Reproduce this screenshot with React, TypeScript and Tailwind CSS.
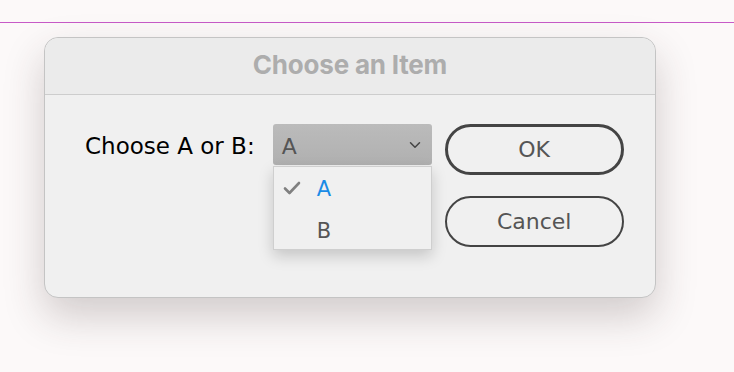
import { ChevronDown } from 'lucide-react';

const lucida = { fontFamily: '"DejaVu Sans", "Liberation Sans", sans-serif' };

export default function App() {
  return (
    <div className="w-[734px] h-[372px] bg-[#fcf9f9] overflow-hidden">
      {/* guide line */}
      <div className="h-[22px]" />
      <div className="h-px bg-[#c75ac7]" />

      <div className="pl-[44px] pt-[14px]">
        <div className="w-[612px] h-[261px] rounded-[14px] border border-[#c4c4c4] bg-[#f0f0f0] shadow-[0_18px_40px_rgba(60,40,40,0.22)]">
          {/* title bar */}
          <div className="h-[57px] rounded-t-[14px] bg-[#ebebeb] border-b border-[#cdcdcd] flex items-center justify-center">
            <span className="text-[26px] font-bold text-[#adadad] tracking-[-0.2px] mb-[3px]" style={{ fontFamily: 'Inter, sans-serif' }}>
              Choose an Item
            </span>
          </div>

          {/* body */}
          <div className="flex pt-[29px] pl-[40px]">
            <div className="text-[23px] text-black h-[44px] flex items-center pr-[18px]" style={lucida}>
              Choose A or B:
            </div>

            <div className="relative">
              <div className="w-[159px] h-[41px] rounded-[3px] bg-gradient-to-b from-[#bbbbbb] to-[#b0b0b0] flex items-center justify-between pl-[9px] pr-[8px]">
                <span className="text-[22px] text-[#555555] pt-[3px]" style={lucida}>A</span>
                <ChevronDown size={18} strokeWidth={2} className="text-[#444444]" />
              </div>
              <div className="absolute left-0 top-[42px] w-[159px] bg-[#f0f0f0] border border-[#cfcfcf] shadow-[0_6px_14px_rgba(0,0,0,0.18)] flex flex-col">
                <div className="h-[42px] shrink-0 flex items-center pt-[3px]">
                  <svg width="18" height="14" viewBox="0 0 18 14" className="ml-[9px] mr-[16px] -mt-[3px]">
                    <path d="M2 7.5 L6.5 12 L16 2" fill="none" stroke="#808080" strokeWidth="2.6" strokeLinecap="round" strokeLinejoin="round" />
                  </svg>
                  <span className="text-[21px] text-[#1a8be6]" style={lucida}>A</span>
                </div>
                <div className="h-[40px] shrink-0 flex items-center pl-[43px] pt-[6px]">
                  <span className="text-[21px] text-[#555555]" style={lucida}>B</span>
                </div>
              </div>
            </div>

            <div className="flex flex-col gap-[21px] ml-[13px]">
              <button className="w-[179px] h-[51px] rounded-full border-[3px] border-[#444444] text-[22px] text-[#555555] flex items-center justify-center" style={lucida}>
                OK
              </button>
              <button className="w-[179px] h-[51px] rounded-full border-2 border-[#444444] text-[22px] text-[#555555] flex items-center justify-center" style={lucida}>
                Cancel
              </button>
            </div>
          </div>
        </div>
      </div>
    </div>
  );
}
